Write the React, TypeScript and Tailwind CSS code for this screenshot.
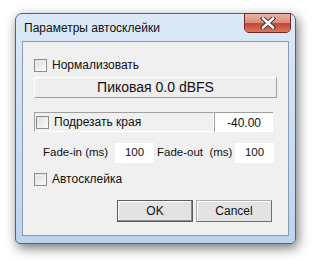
import React from 'react';

function CheckBox() {
  return (
    <span className="w-[13px] h-[13px] shrink-0 border border-[#8e8f8f] bg-gradient-to-br from-[#dcdcdc] to-[#fcfcfc] flex">
      <span className="m-[1px] flex-1 border border-[#f4f4f4]/70" />
    </span>
  );
}

function CloseButton() {
  return (
    <div className="w-[47px] h-[20px] -mt-px rounded-b-[5px] border border-[#6b2a22] flex flex-col overflow-hidden relative">
      <div className="h-[9px] bg-gradient-to-b from-[#eab3a6] to-[#d98b7b]" />
      <div className="flex-1 bg-gradient-to-b from-[#c4412f] to-[#d9735f]" />
      <svg className="absolute left-[15px] top-[3px]" width="16" height="12" viewBox="0 0 16 12">
        <path d="M3 1.5 L13 10.5 M13 1.5 L3 10.5" stroke="#3b3b3b" strokeWidth="4.4" strokeLinecap="square" />
        <path d="M3 1.5 L13 10.5 M13 1.5 L3 10.5" stroke="#ffffff" strokeWidth="2.4" strokeLinecap="square" />
      </svg>
    </div>
  );
}

export default function App() {
  return (
    <div className="w-[317px] h-[261px] bg-white overflow-hidden pl-[15px] pt-[13px] font-['Liberation_Sans',Arial,sans-serif] text-[12px] text-[#111]">
      <div className="w-[281px] h-[231px] rounded-t-[7px] rounded-b-[5px] border border-[#52637a] bg-gradient-to-b from-[#dce9f6] via-[#cadff4] to-[#bcd4ee] shadow-[2px_4px_12px_rgba(0,0,0,0.55)] flex flex-col">
        {/* title bar */}
        <div className="h-[27px] flex items-start justify-between pl-[8px] pr-[4px]">
          <span className="mt-[7px] text-[12px] leading-[15px] text-[#111]">Параметры автосклейки</span>
          <CloseButton />
        </div>

        {/* client area */}
        <div className="flex-1 px-[6px] pb-[7px] flex">
          <div className="flex-1 border border-[#8a9cb2] bg-[#f0f0f0] px-[11px] flex flex-col">
            <div className="h-[16px] mt-[15px] flex items-center gap-[5px]">
              <CheckBox />
              <span>Нормализовать</span>
            </div>

            <div className="h-[21px] mt-[4px] border-t border-l border-white border-b border-r border-b-[#a0a0a0] border-r-[#a0a0a0] bg-[#eeeeee] flex items-center justify-center text-[14px]">
              Пиковая 0.0 dBFS
            </div>

            <div className="h-[20px] mt-[14px] flex">
              <div className="w-[180px] border-t border-l border-[#a0a0a0] border-b border-r border-b-white border-r-white pl-[1px] flex items-center gap-[5px]">
                <CheckBox />
                <span>Подрезать края</span>
              </div>
              <div className="w-[59px] bg-white border-t border-l border-[#a0a0a0] flex items-center justify-center">
                -40.00
              </div>
            </div>

            <div className="h-[20px] mt-[11px] flex items-center text-[11.5px]">
              <span className="w-[81px] shrink-0 pl-[9px]">Fade-in (ms)</span>
              <div className="w-[39px] h-[20px] shrink-0 bg-white flex items-center justify-center">100</div>
              <span className="w-[81px] shrink-0 pl-[3px] whitespace-pre">Fade-out  (ms)</span>
              <div className="w-[39px] h-[20px] shrink-0 bg-white flex items-center justify-center">100</div>
            </div>

            <div className="h-[16px] mt-[8px] flex items-center gap-[5px]">
              <CheckBox />
              <span>Автосклейка</span>
            </div>

            <div className="h-[22px] mt-[13px] pr-[5px] flex justify-end gap-[3px]">
              <button className="w-[76px] h-[22px] border border-[#5c5c5c] bg-[#e3e3e3] shadow-[inset_-1px_-1px_0_#8a8a8a,inset_1px_1px_0_#ffffff] flex items-center justify-center text-[12px]">
                OK
              </button>
              <button className="w-[76px] h-[22px] border border-[#adadad] border-b-[#6f6f6f] border-r-[#6f6f6f] bg-[#e3e3e3] shadow-[inset_1px_1px_0_#ffffff] flex items-center justify-center text-[12px]">
                Cancel
              </button>
            </div>
          </div>
        </div>
      </div>
    </div>
  );
}
